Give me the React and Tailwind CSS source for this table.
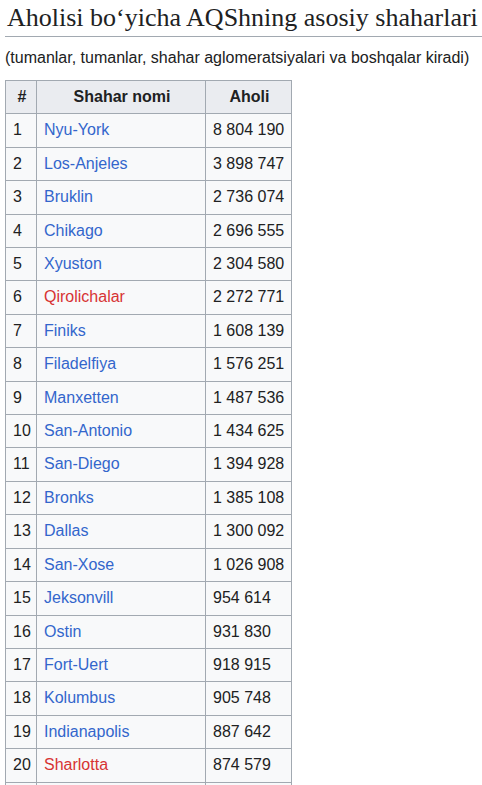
import React from "react";

const cities = [
  ["Nyu-York", "8 804 190"],
  ["Los-Anjeles", "3 898 747"],
  ["Bruklin", "2 736 074"],
  ["Chikago", "2 696 555"],
  ["Xyuston", "2 304 580"],
  ["Qirolichalar", "2 272 771", true],
  ["Finiks", "1 608 139"],
  ["Filadelfiya", "1 576 251"],
  ["Manxetten", "1 487 536"],
  ["San-Antonio", "1 434 625"],
  ["San-Diego", "1 394 928"],
  ["Bronks", "1 385 108"],
  ["Dallas", "1 300 092"],
  ["San-Xose", "1 026 908"],
  ["Jeksonvill", "954 614"],
  ["Ostin", "931 830"],
  ["Fort-Uert", "918 915"],
  ["Kolumbus", "905 748"],
  ["Indianapolis", "887 642"],
  ["Sharlotta", "874 579", true],
];

const cell = "border border-[#a2a9b1] pl-[7px] pr-[5px] py-[5px] leading-[22.4px] whitespace-nowrap";

export default function App() {
  return (
    <div className="bg-white text-[#202122] pl-[5px] pt-[3px] font-['Liberation_Sans',Arial,sans-serif] text-[16px] h-[785px] overflow-hidden">
      <h2 className="font-['Liberation_Serif','Times_New_Roman',serif] text-[26px] leading-[30px] border-b border-[#a2a9b1] pl-[2px] pb-[3px] whitespace-nowrap">
        Aholisi bo‘yicha AQShning asosiy shaharlari
      </h2>
      <p className="mt-[10px] mb-[11px] leading-[22px] whitespace-nowrap">
        (tumanlar, tumanlar, shahar aglomeratsiyalari va boshqalar kiradi)
      </p>
      <table className="table-fixed w-[286px] border-collapse border border-[#a2a9b1]">
        <thead>
          <tr className="bg-[#eaecf0] font-bold">
            <th className={`${cell} w-[31px] text-center`}>#</th>
            <th className={`${cell} w-[169px] text-center`}>Shahar nomi</th>
            <th className={`${cell} w-[86px] text-center`}>Aholi</th>
          </tr>
        </thead>
        <tbody className="bg-[#f8f9fa]">
          {cities.map(([name, pop, red], i) => (
            <tr key={name}>
              <td className={cell}>{i + 1}</td>
              <td className={`${cell} ${red ? "text-[#d73333]" : "text-[#3366cc]"}`}>{name}</td>
              <td className={cell}>{pop}</td>
            </tr>
          ))}
          {/* next row, cut off by the window */}
          <tr className="h-[34px]">
            <td className="border border-[#a2a9b1]"></td>
            <td className="border border-[#a2a9b1]"></td>
            <td className="border border-[#a2a9b1]"></td>
          </tr>
        </tbody>
      </table>
    </div>
  );
}
